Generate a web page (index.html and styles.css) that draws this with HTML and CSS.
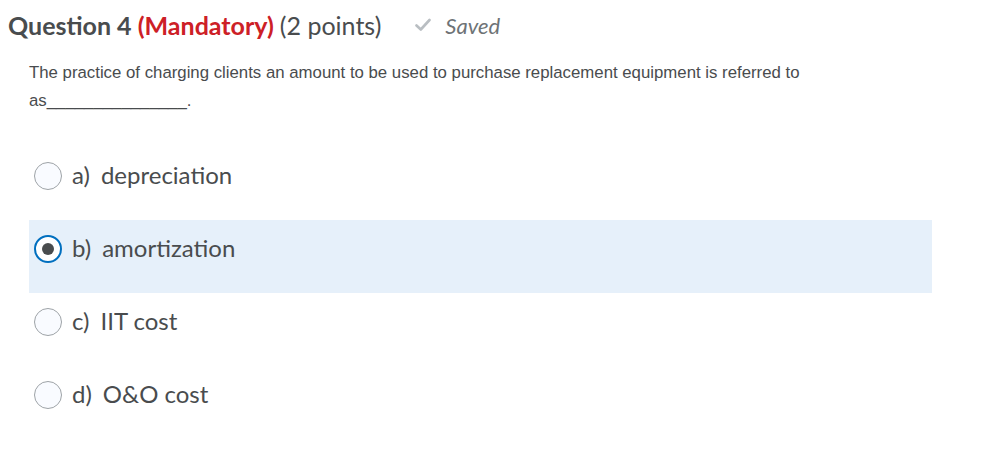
FILE: index.html
```html
<!DOCTYPE html>
<html>
<head>
<meta charset="utf-8">
<link rel="stylesheet" href="styles.css">
</head>
<body>
<div class="page">
  <div class="header">
    <h2 class="title">Question 4 <span class="mand">(Mandatory)</span> <span class="pts">(2 points)</span></h2>
    <div class="saved">
      <svg class="check" width="16" height="14" viewBox="0 0 16 14"><path d="M1.5 7.5 L5.8 11.5 L14.5 2" fill="none" stroke="#b9bec2" stroke-width="2.6" stroke-linecap="round" stroke-linejoin="round"/></svg>
      <span>Saved</span>
    </div>
  </div>
  <div class="question">
    <p>The practice of charging clients an amount to be used to purchase replacement equipment is referred to as_______________.</p>
  </div>
  <div class="options">
    <div class="option"><span class="radio"></span><span class="letter">a)</span><span class="label">depreciation</span></div>
    <div class="option selected"><span class="radio checked"></span><span class="letter">b)</span><span class="label">amortization</span></div>
    <div class="option"><span class="radio"></span><span class="letter">c)</span><span class="label">IIT cost</span></div>
    <div class="option"><span class="radio"></span><span class="letter">d)</span><span class="label">O&amp;O cost</span></div>
  </div>
</div>
</body>
</html>
```
FILE: styles.css
```css
html, body { margin: 0; padding: 0; background: #fff; }
body { font-family: Lato, "Noto Sans", sans-serif; color: #494c4e; }
.page { padding: 8px 0 0 8px; width: 924px; }
.header { display: flex; align-items: center; height: 34px; }
.title { margin: 0; font-size: 25px; font-weight: 700; color: #494c4e; white-space: nowrap; }
.mand { color: #cd2026; }
.pts { font-weight: 400; }
.saved { display: flex; align-items: center; margin-left: 34px; color: #6e7376; font-style: italic; font-size: 22px; }
.check { margin-right: 14px; }
.question { padding: 17px 0 0 21px; }
.question p { margin: 0; font-family: "Liberation Sans", Arial, sans-serif; font-size: 16.8px; line-height: 28px; color: #494c4e; width: 812px; }
.options { margin: 32px 0 0 21px; }
.option { display: flex; align-items: flex-start; height: 73px; box-sizing: border-box; padding: 14px 0 0 5px; }
.option.selected { background: #e6f0fa; }
.radio { box-sizing: border-box; flex: none; width: 28px; height: 28px; margin-top: 1px; border: 1px solid #9ea3a7; border-radius: 50%; background: #f9fbff; margin-right: 10px; display: flex; align-items: center; justify-content: center; }
.radio.checked { border: 2px solid #006fbf; background: #fff; }
.radio.checked::after { content: ""; width: 12px; height: 12px; border-radius: 50%; background: #494c4e; }
.letter, .label { font-size: 24px; line-height: 28px; }
.letter { margin-right: 11px; }
```
